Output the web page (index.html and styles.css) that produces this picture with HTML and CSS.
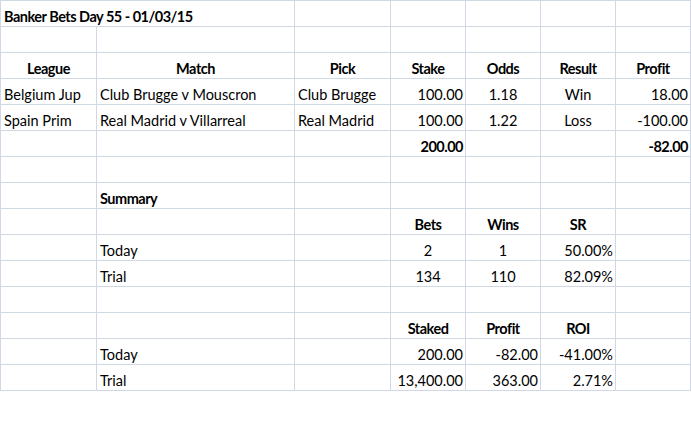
FILE: index.html
```html
<!DOCTYPE html>
<html>
<head>
<meta charset="utf-8">
<link rel="stylesheet" href="styles.css">
</head>
<body>
<div class="sheet">
  <div class="c b span2">Banker Bets Day 55 - 01/03/15</div><div class="c"></div><div class="c"></div><div class="c"></div><div class="c"></div><div class="c"></div>

  <div class="c"></div><div class="c"></div><div class="c"></div><div class="c"></div><div class="c"></div><div class="c"></div><div class="c"></div>

  <div class="c b ctr">League</div><div class="c b ctr">Match</div><div class="c b ctr">Pick</div><div class="c b ctr">Stake</div><div class="c b ctr">Odds</div><div class="c b ctr">Result</div><div class="c b ctr">Profit</div>

  <div class="c">Belgium Jup</div><div class="c">Club Brugge v Mouscron</div><div class="c">Club Brugge</div><div class="c r">100.00</div><div class="c ctr">1.18</div><div class="c ctr">Win</div><div class="c r">18.00</div>

  <div class="c">Spain Prim</div><div class="c">Real Madrid v Villarreal</div><div class="c">Real Madrid</div><div class="c r">100.00</div><div class="c ctr">1.22</div><div class="c ctr">Loss</div><div class="c r">-100.00</div>

  <div class="c"></div><div class="c"></div><div class="c"></div><div class="c b r">200.00</div><div class="c"></div><div class="c"></div><div class="c b r">-82.00</div>

  <div class="c"></div><div class="c"></div><div class="c"></div><div class="c"></div><div class="c"></div><div class="c"></div><div class="c"></div>

  <div class="c"></div><div class="c b">Summary</div><div class="c"></div><div class="c"></div><div class="c"></div><div class="c"></div><div class="c"></div>

  <div class="c"></div><div class="c"></div><div class="c"></div><div class="c b ctr">Bets</div><div class="c b ctr">Wins</div><div class="c b ctr">SR</div><div class="c"></div>

  <div class="c"></div><div class="c">Today</div><div class="c"></div><div class="c ctr">2</div><div class="c ctr">1</div><div class="c r">50.00%</div><div class="c"></div>

  <div class="c"></div><div class="c">Trial</div><div class="c"></div><div class="c ctr">134</div><div class="c ctr">110</div><div class="c r">82.09%</div><div class="c"></div>

  <div class="c"></div><div class="c"></div><div class="c"></div><div class="c"></div><div class="c"></div><div class="c"></div><div class="c"></div>

  <div class="c"></div><div class="c"></div><div class="c"></div><div class="c b ctr">Staked</div><div class="c b ctr">Profit</div><div class="c b ctr">ROI</div><div class="c"></div>

  <div class="c"></div><div class="c">Today</div><div class="c"></div><div class="c r">200.00</div><div class="c r">-82.00</div><div class="c r">-41.00%</div><div class="c"></div>

  <div class="c"></div><div class="c">Trial</div><div class="c"></div><div class="c r">13,400.00</div><div class="c r">363.00</div><div class="c r">2.71%</div><div class="c"></div>
</div>
</body>
</html>
```

FILE: styles.css
```css
html, body {
  margin: 0;
  padding: 0;
  background: #ffffff;
}

.sheet {
  display: grid;
  grid-template-columns: 95px 197px 95px 74px 74px 74px 74px;
  grid-auto-rows: 25px;
  gap: 1px;
  padding: 1px;
  background: #d0d7e5;
  width: 689px;
  font-family: Lato, "Open Sans", sans-serif;
  font-size: 14.5px;
  color: #000;
}

.c {
  background: #fff;
  display: flex;
  align-items: flex-end;
  justify-content: flex-start;
  padding: 0 2px 1px 3px;
  line-height: 16px;
  white-space: nowrap;
  overflow: visible;
  min-width: 0;
}

.span2 {
  grid-column: span 2;
}

.b {
  font-weight: bold;
  letter-spacing: -0.5px;
}

.ctr {
  justify-content: center;
  padding-left: 0;
  padding-right: 0;
}

.r {
  justify-content: flex-end;
}
```
